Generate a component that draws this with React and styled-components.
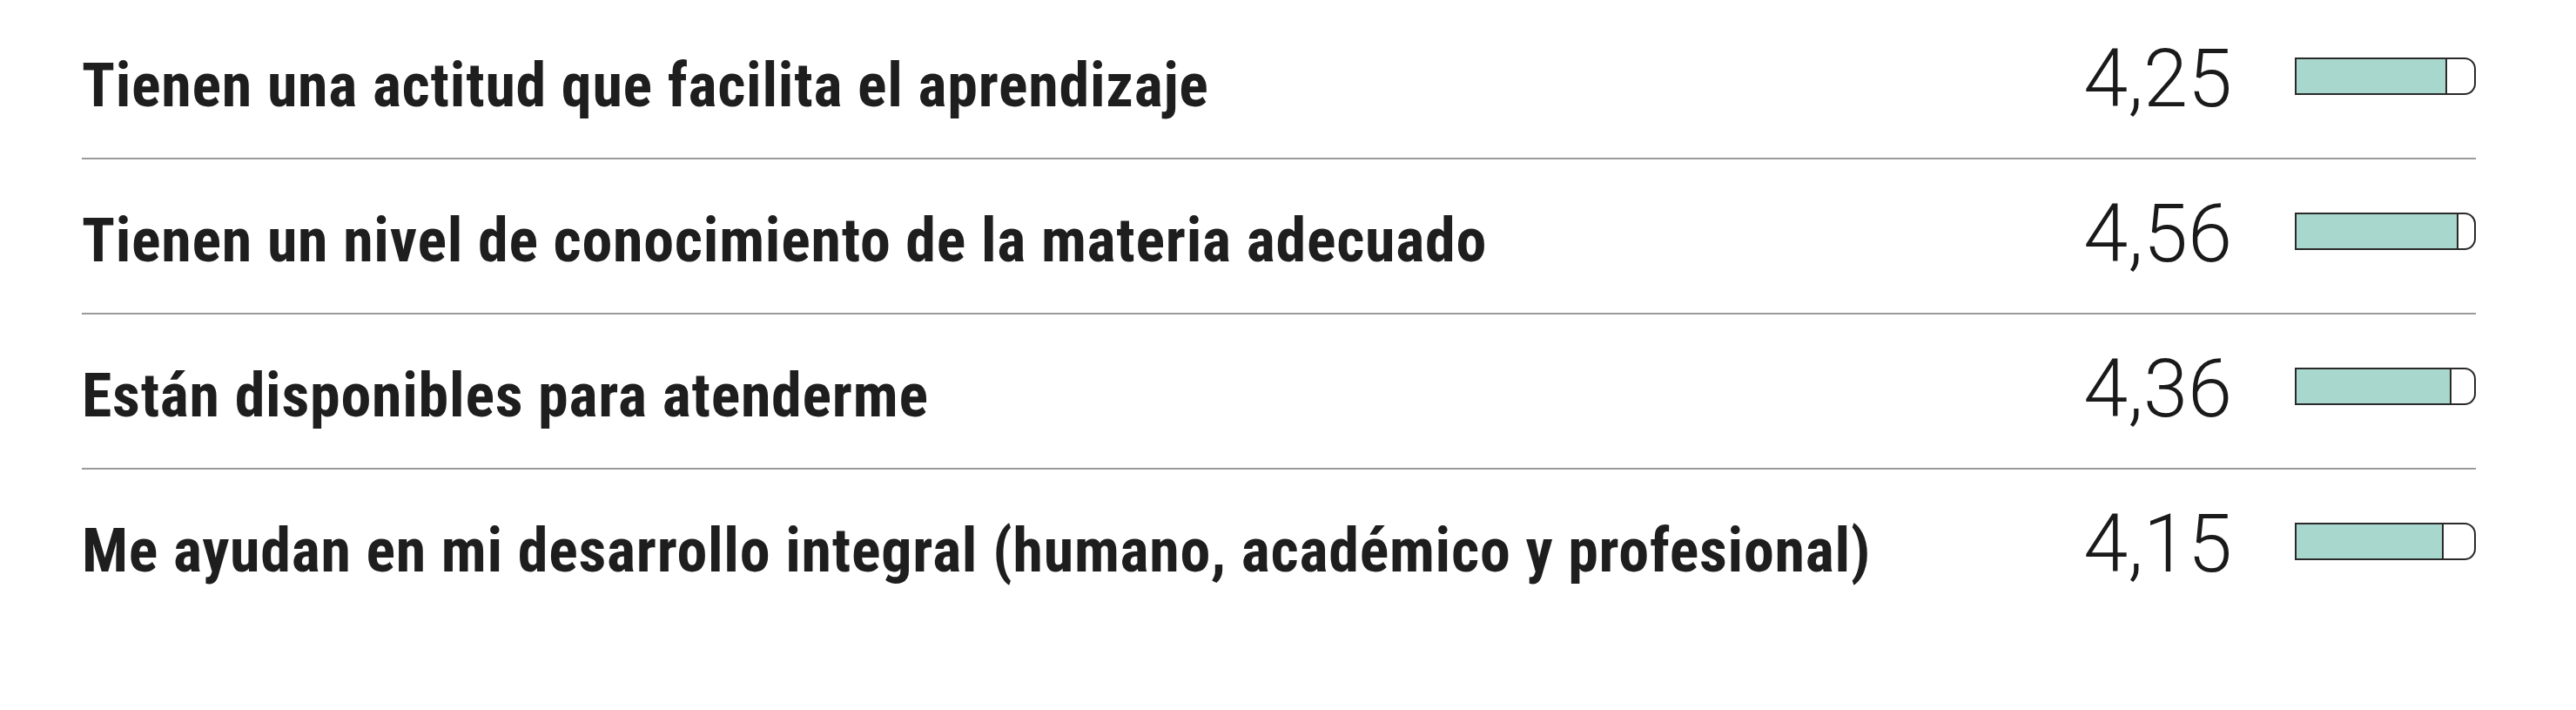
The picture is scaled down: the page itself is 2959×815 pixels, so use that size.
import React from "react";
import styled, { createGlobalStyle } from "styled-components";

const Global = createGlobalStyle`
  html, body { margin: 0; padding: 0; background: #ffffff; }
  body { font-family: Roboto, "Liberation Sans", sans-serif; }
`;

const List = styled.div`
  display: flex;
  flex-direction: column;
  padding: 5px 115px 0 94px;
`;

const Row = styled.div`
  display: flex;
  align-items: center;
  height: 176px;
  border-bottom: 2px solid #9a9a9a;
  &:last-child { border-bottom: none; }
`;

const Label = styled.div`
  flex: 1;
  margin-top: 10px;
  font-family: Roboto, "Liberation Sans", sans-serif;
  font-weight: 700;
  font-stretch: 87%;
  font-size: 70px;
  letter-spacing: 0.75px;
  color: #1e1e1e;
  white-space: nowrap;
`;

const Value = styled.div`
  margin-bottom: 6px;
  font-family: Roboto, "Liberation Sans", sans-serif;
  font-weight: 300;
  font-size: 92px;
  color: #1a1a1a;
  text-align: right;
`;

const Bar = styled.div`
  margin-left: 72px;
  margin-bottom: 12px;
  width: 208px;
  height: 43px;
  box-sizing: border-box;
  border: 2px solid #2a2a2a;
  border-radius: 0 13px 13px 0;
  overflow: hidden;
  background: #ffffff;
`;

const Fill = styled.div`
  height: 100%;
  background: #a8d7cd;
  border-right: 2px solid #2a2a2a;
  box-sizing: border-box;
`;

const rows = [
  { label: "Tienen una actitud que facilita el aprendizaje", value: 4.25 },
  { label: "Tienen un nivel de conocimiento de la materia adecuado", value: 4.56 },
  { label: "Están disponibles para atenderme", value: 4.36 },
  { label: "Me ayudan en mi desarrollo integral (humano, académico y profesional)", value: 4.15 },
];

export default function App() {
  return (
    <>
      <Global />
      <List>
        {rows.map((r) => (
          <Row key={r.label}>
            <Label>{r.label}</Label>
            <Value>{r.value.toFixed(2).replace(".", ",")}</Value>
            <Bar>
              <Fill style={{ width: `${(r.value / 5) * 100}%` }} />
            </Bar>
          </Row>
        ))}
      </List>
    </>
  );
}
